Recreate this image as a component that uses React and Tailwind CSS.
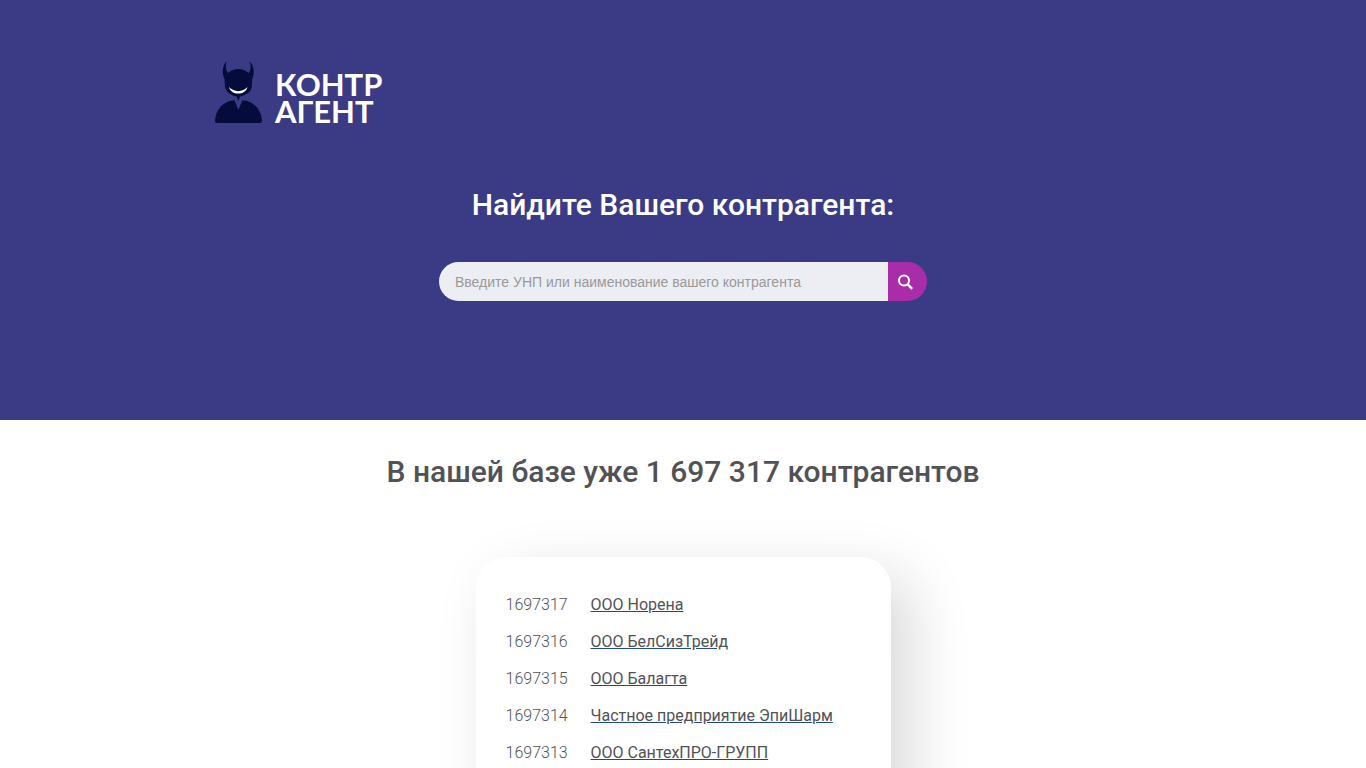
const companies = [
  { id: 1697317, name: 'ООО Норена' },
  { id: 1697316, name: 'ООО БелСизТрейд' },
  { id: 1697315, name: 'ООО Балагта' },
  { id: 1697314, name: 'Частное предприятие ЭпиШарм' },
  { id: 1697313, name: 'ООО СантехПРО-ГРУПП' },
];

function Logo() {
  return (
    <a href="/" className="flex w-fit items-start text-white">
      <svg className="w-[50px] h-16" viewBox="-1 0 50 64" aria-hidden="true">
        <g fill="#050b3a">
          <path d="M12.500 1.500C8.500 5 7.500 13 10.500 19L11 27C12 32 17 35.500 22.500 36.500L24.300 41L26 36.500C32 35.500 37 32 37.700 27L38.200 19C41 13 40 5 35.500 1.500C37.200 6 37.200 10 34.500 13C29 7.500 19.500 7.500 14 13C11.500 10 11.500 6 12.500 1.500Z" />
          <path d="M20.500 40.300L24.300 50L28.500 40.300C39 41 47.500 49 48 61Q48 63 46 63H3Q1 63 1 61C1.500 49 10 41 20.500 40.300Z" />
        </g>
        <path fill="#fff" d="M15 27C20 32.500 28.500 32.500 33.500 27C31.500 35.800 17 35.800 15 27Z" />
      </svg>
      <span className="ml-3 mt-[11px] flex flex-col font-['Lato',sans-serif] font-bold text-[31px] leading-[27px]">
        <span>КОНТР</span>
        <span>АГЕНТ</span>
      </span>
    </a>
  );
}

export default function App() {
  return (
    <div className="bg-white text-[#515256] font-['Roboto',sans-serif]">
      <header className="bg-[#3a3b84] pt-[60px] pb-[119px]">
        <div className="max-w-[940px] mx-auto">
          <Logo />
          <h1 className="mt-[60px] text-center text-3xl leading-10 font-medium text-white">
            Найдите Вашего контрагента:
          </h1>
          <form className="mt-[37px] mx-auto flex max-w-[488px] h-[39px] rounded-full overflow-hidden" onSubmit={e => e.preventDefault()}>
            <input
              type="text"
              aria-label="Введите УНП или наименование вашего контрагента"
              placeholder="Введите УНП или наименование вашего контрагента"
              className="flex-1 min-w-0 bg-[#edeef4] px-4 font-['Liberation_Sans',sans-serif] text-sm text-gray-700 placeholder:text-[#999999] outline-none"
            />
            <button type="submit" aria-label="Найти" className="w-[39px] bg-[#a92ca9] flex items-center pl-[9px]">
              <svg className="w-4 h-4" viewBox="0 0 16 16" fill="none" stroke="#fff">
                <circle cx="7" cy="6.500" r="5" strokeWidth="2" />
                <path d="M10.500 10.100L15.200 14.800" strokeWidth="2.400" />
              </svg>
            </button>
          </form>
        </div>
      </header>

      <main className="pt-8 pb-16">
        <h2 className="text-center text-3xl leading-10 font-medium">
          В нашей базе уже 1 697 317 контрагентов
        </h2>
        {/* Latest companies */}
        <div className="mt-[65px] mx-auto max-w-[415px] rounded-[30px] bg-white px-[30px] pt-9 pb-20 shadow-[20px_20px_60px_#d9d9d9]">
          <ul className="space-y-[13px]">
            {companies.map(company => (
              <li key={company.id} className="flex text-base leading-6">
                <span className="w-[85px] font-light">{company.id}</span>
                <a href={`/company/${company.id}`} className="underline decoration-[#1f4697]">{company.name}</a>
              </li>
            ))}
          </ul>
        </div>
      </main>
    </div>
  );
}
